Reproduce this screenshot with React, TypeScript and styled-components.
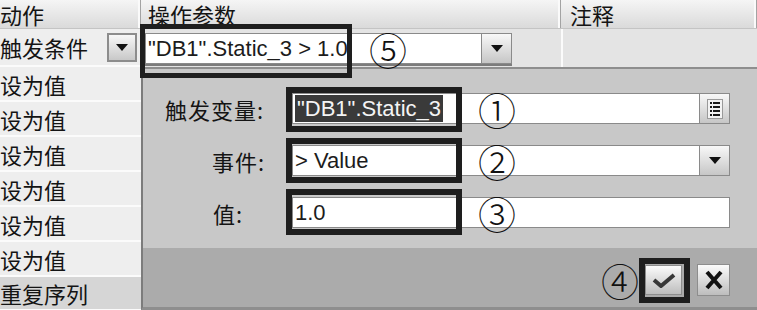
import React from 'react'
import styled, { createGlobalStyle } from 'styled-components'

const CJK = `"Noto Sans CJK SC", "Noto Sans", sans-serif`
const LATIN = `"Liberation Sans", "DejaVu Sans", sans-serif`

const GlobalStyle = createGlobalStyle`
    html, body {
        margin: 0;
        padding: 0;
        background: #e6e6e6;
        overflow: hidden;
    }
`

const Screen = styled.div`
    width: 757px;
    height: 310px;
    display: flex;
    flex-direction: column;
    overflow: hidden;
    font-family: ${CJK};
    color: #141414;
`

const HeaderRow = styled.div`
    display: flex;
    height: 28px;
    flex: none;
    background: linear-gradient(#f5f5f5, #dadada);
    border-bottom: 1px solid #c4c4c4;
`

const HeaderCell = styled.div<{ $width?: number; $pad?: number }>`
    width: ${p => (p.$width ? `${p.$width}px` : 'auto')};
    flex: ${p => (p.$width ? 'none' : 1)};
    box-sizing: border-box;
    display: flex;
    align-items: center;
    padding-left: ${p => p.$pad ?? 0}px;
    font-size: 22px;
    line-height: 1;
    white-space: nowrap;
    border-right: 1px solid #a3a3a3;
    box-shadow: inset -2px 0 0 #fafafa;
`

const Body = styled.div`
    display: flex;
    flex: 1;
    min-height: 0;
`

const ActionList = styled.div`
    width: 141px;
    flex: none;
    display: flex;
    flex-direction: column;
`

const ActionRow = styled.div<{ $height: number; $muted?: boolean }>`
    height: ${p => p.$height}px;
    flex: none;
    box-sizing: border-box;
    display: flex;
    align-items: center;
    padding-right: 4px;
    background: ${p => (p.$muted ? '#d6d6d6' : '#eeeeee')};
    border-bottom: 2px solid #fbfbfb;
`

const ActionName = styled.span`
    font-size: 22px;
    line-height: 1;
    white-space: nowrap;
`

const DropButton = styled.div`
    margin-left: auto;
    width: 30px;
    height: 29px;
    box-sizing: border-box;
    display: flex;
    align-items: center;
    justify-content: center;
    border: 2px solid #8c8c8c;
    background: linear-gradient(#f7f7f7, #c8c8c8);
`

const Caret = styled.span`
    width: 0;
    height: 0;
    border-left: 6px solid transparent;
    border-right: 6px solid transparent;
    border-top: 7px solid #111;
`

const ParamsColumn = styled.div`
    flex: 1;
    display: flex;
    flex-direction: column;
    min-width: 0;
`

const TriggerRow = styled.div`
    height: 38px;
    flex: none;
    display: flex;
    background: #e4e4e4;
`

const ParamCell = styled.div`
    width: 420px;
    flex: none;
    position: relative;
    padding: 4px 0 0 4px;
    box-sizing: border-box;
`

const CommentCell = styled.div`
    flex: 1;
    border-left: 2px solid #fbfbfb;
`

const Combo = styled.div<{ $width?: number }>`
    display: flex;
    width: ${p => (p.$width ? `${p.$width}px` : 'auto')};
    height: 31px;
    border-bottom: 2px solid #7c7c7c;
`

const TextBox = styled.div`
    flex: 1;
    position: relative;
    display: flex;
    align-items: center;
    box-sizing: border-box;
    height: 31px;
    padding-left: 2px;
    background: #fff;
    border: 1px solid #8a8a8a;
    font-family: ${LATIN};
    font-size: 22px;
    white-space: nowrap;
    color: #1c1c1c;
`

const SelectedText = styled.span`
    align-self: stretch;
    display: flex;
    align-items: center;
    padding: 0 2px;
    margin: 1px 0;
    background: #3a3a3a;
    color: #f4f4f4;
`

const SideButton = styled.div`
    width: 30px;
    flex: none;
    box-sizing: border-box;
    height: 31px;
    display: flex;
    align-items: center;
    justify-content: center;
    border: 1px solid #8a8a8a;
    border-left: none;
    background: linear-gradient(#f8f8f8, #c6c6c6);
`

const Marker = styled.span`
    font-family: ${CJK};
    font-size: 38px;
    line-height: 1;
    font-weight: 300;
    color: #111;
`

const FooterMarker = styled(Marker)`
    margin-right: -4px;
`

const FloatingMarker = styled(Marker)<{ $left: number }>`
    position: absolute;
    left: ${p => p.$left}px;
    top: 50%;
    transform: translateY(-50%);
`

const Highlight = styled.div<{ $top: number; $left: number; $width: number; $height: number; $weight?: number }>`
    position: absolute;
    top: ${p => p.$top}px;
    left: ${p => p.$left}px;
    width: ${p => p.$width}px;
    height: ${p => p.$height}px;
    box-sizing: border-box;
    border: ${p => p.$weight ?? 6}px solid #1e1e1e;
    pointer-events: none;
    z-index: 2;
`

const Dialog = styled.div`
    flex: 1;
    display: flex;
    flex-direction: column;
    background: #c8c8c8;
    border-left: 2px solid #7c7c7c;
    border-top: 2px solid #8e8e8e;
    border-bottom: 3px solid #8e8e8e;
`

const Form = styled.div`
    display: grid;
    grid-template-columns: 149px 1fr;
    grid-auto-rows: 31px;
    row-gap: 21px;
    align-items: center;
    padding: 24px 27px 20px 0;
`

const Label = styled.span<{ $indent: number }>`
    padding-left: ${p => p.$indent}px;
    font-size: 22px;
    line-height: 1;
    letter-spacing: 1px;
    white-space: nowrap;
`

const Field = styled.div`
    position: relative;
    display: flex;
    height: 31px;
`

const Footer = styled.div`
    flex: 1;
    display: flex;
    align-items: center;
    justify-content: flex-end;
    gap: 10px;
    padding: 4px 27px 0 0;
    background: #ababab;
`

const ActionButton = styled.div<{ $width: number; $height: number }>`
    position: relative;
    width: ${p => p.$width}px;
    height: ${p => p.$height}px;
    box-sizing: border-box;
    display: flex;
    align-items: center;
    justify-content: center;
    border: 1px solid #8d8d8d;
    background: linear-gradient(#fbfbfb, #bdbdbd);
    & + & {
        margin-left: 5px;
    }
`

const ListIcon = () => (
    <svg width="16" height="20" viewBox="0 0 16 20">
        <rect x="0.5" y="0.5" width="15" height="19" fill="#f3f3f3" stroke="#9a9a9a" />
        {[4, 8, 12, 16].map(y => (
            <g key={y}>
                <rect x="3" y={y - 1} width="2" height="2" fill="#1a1a1a" />
                <rect x="6" y={y - 1} width="7" height="2" fill="#1a1a1a" />
            </g>
        ))}
    </svg>
)

const CheckIcon = () => (
    <svg width="24" height="18" viewBox="0 0 24 18">
        <path d="M2 9 L9 15 L22 4" fill="none" stroke="#383838" strokeWidth="4" strokeLinejoin="round" />
    </svg>
)

const CloseIcon = () => (
    <svg width="20" height="22" viewBox="0 0 20 22">
        <path d="M3 3 L17 19 M17 3 L3 19" fill="none" stroke="#111" strokeWidth="4" />
    </svg>
)

export default function App() {
    return (
        <>
            <GlobalStyle />
            <Screen>
                <HeaderRow>
                    <HeaderCell $width={141}>动作</HeaderCell>
                    <HeaderCell $width={420} $pad={7}>操作参数</HeaderCell>
                    <HeaderCell $pad={9}>注释</HeaderCell>
                </HeaderRow>
                <Body>
                    <ActionList>
                        <ActionRow $height={38}>
                            <ActionName>触发条件</ActionName>
                            <DropButton>
                                <Caret />
                            </DropButton>
                        </ActionRow>
                        {Array.from({ length: 6 }).map((_, i) => (
                            <ActionRow key={i} $height={35}>
                                <ActionName>设为值</ActionName>
                            </ActionRow>
                        ))}
                        <ActionRow $height={34} $muted>
                            <ActionName>重复序列</ActionName>
                        </ActionRow>
                    </ActionList>
                    <ParamsColumn>
                        <TriggerRow>
                            <ParamCell>
                                <Combo $width={367}>
                                    <TextBox>
                                        "DB1".Static_3 &gt; 1.0
                                        <FloatingMarker $left={223}>⑤</FloatingMarker>
                                    </TextBox>
                                    <SideButton>
                                        <Caret />
                                    </SideButton>
                                </Combo>
                                <Highlight $top={-5} $left={-1} $width={212} $height={54} $weight={5} />
                            </ParamCell>
                            <CommentCell />
                        </TriggerRow>
                        <Dialog>
                            <Form>
                                <Label $indent={22}>触发变量:</Label>
                                <Field>
                                    <TextBox>
                                        <SelectedText>"DB1".Static_3</SelectedText>
                                        <FloatingMarker $left={185}>①</FloatingMarker>
                                    </TextBox>
                                    <SideButton>
                                        <ListIcon />
                                    </SideButton>
                                    <Highlight $top={-6} $left={-6} $width={176} $height={45} />
                                </Field>
                                <Label $indent={69}>事件:</Label>
                                <Field>
                                    <TextBox>
                                        &gt; Value
                                        <FloatingMarker $left={185}>②</FloatingMarker>
                                    </TextBox>
                                    <SideButton>
                                        <Caret />
                                    </SideButton>
                                    <Highlight $top={-7} $left={-6} $width={176} $height={45} />
                                </Field>
                                <Label $indent={70}>值:</Label>
                                <Field>
                                    <TextBox>
                                        1.0
                                        <FloatingMarker $left={185}>③</FloatingMarker>
                                    </TextBox>
                                    <Highlight $top={-8} $left={-6} $width={176} $height={46} />
                                </Field>
                            </Form>
                            <Footer>
                                <FooterMarker>④</FooterMarker>
                                <ActionButton $width={37} $height={30}>
                                    <CheckIcon />
                                    <Highlight $top={-8} $left={-7} $width={51} $height={45} />
                                </ActionButton>
                                <ActionButton $width={33} $height={32}>
                                    <CloseIcon />
                                </ActionButton>
                            </Footer>
                        </Dialog>
                    </ParamsColumn>
                </Body>
            </Screen>
        </>
    )
}
